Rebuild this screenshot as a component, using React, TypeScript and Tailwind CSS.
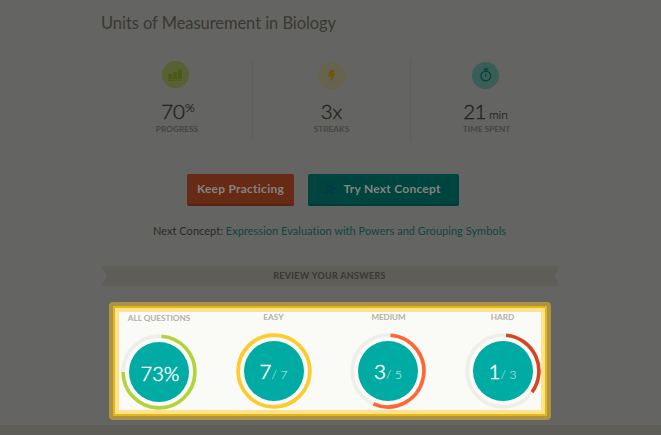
import React from 'react';

function BarsIcon() {
  return (
    <svg width="27" height="27" viewBox="0 0 27 27">
      <circle cx="13.5" cy="13.5" r="13.5" fill="#586034" />
      <g fill="#4a5b13">
        <rect x="6.5" y="13" width="3.6" height="5" rx="0.5" />
        <rect x="11.2" y="10.8" width="3.6" height="7.2" rx="0.5" />
        <rect x="16" y="8.3" width="3.8" height="9.7" rx="0.5" />
        <rect x="6.5" y="18.8" width="13.3" height="0.9" />
      </g>
    </svg>
  );
}

function BoltIcon() {
  return (
    <svg width="27" height="27" viewBox="0 0 27 27">
      <circle cx="13.5" cy="13.5" r="13.5" fill="#66634f" />
      <path d="M12 8h4.3l-1.5 3.8h2.6L12.2 20.5l1.2-5.8h-3.2z" fill="#6f5409" />
    </svg>
  );
}

function TimerIcon() {
  return (
    <svg width="27" height="27" viewBox="0 0 27 27">
      <circle cx="13.5" cy="13.5" r="13.5" fill="#3a5d57" />
      <circle cx="13.8" cy="14" r="4.9" fill="none" stroke="#02443f" strokeWidth="1.3" />
      <path d="M11.6 6.2h4.6v1.8h-1.4v1.4h-1.8V8h-1.4z" fill="#02443f" />
      <path d="M13.8 11.5v3.3" stroke="#02443f" strokeWidth="1" />
    </svg>
  );
}

function RunnerIcon() {
  return (
    <svg width="12" height="14" viewBox="0 0 12 14" fill="none" stroke="#003a4b" strokeWidth="1.6" strokeLinecap="round" strokeLinejoin="round">
      <circle cx="7.8" cy="1.9" r="1.3" fill="#003a4b" stroke="none" />
      <path d="M2 6.2l1.7-2.1 3.1.3-1.7 4 2.2 1.6-.9 3M6.8 4.6l1.3 2 2-.7M4.8 8.6L3.7 10.4 1 10.6" />
    </svg>
  );
}

interface RingProps {
  label: string;
  color: string;
  from: number;
  to: number;
  className: string;
  labelClass: string;
  children: React.ReactNode;
}

function Ring({ label, color, from, to, className, labelClass, children }: RingProps) {
  const r = 35.9;
  const point = (deg: number) => {
    const a = (deg * Math.PI) / 180;
    return `${38 + r * Math.sin(a)} ${38 - r * Math.cos(a)}`;
  };
  return (
    <div className={`flex w-[76px] flex-none flex-col items-center ${className}`}>
      <div className={`h-[10px] whitespace-nowrap font-bold leading-[10px] text-[#b5b0a7] ${labelClass}`}>{label}</div>
      <div className="mt-[11px] grid h-[76px] w-[76px] flex-none">
        <svg className="col-start-1 row-start-1" width="76" height="76" viewBox="0 0 76 76">
          <circle cx="38" cy="38" r={r} fill="none" stroke="#efeeea" strokeWidth="3.6" />
          {to - from >= 360 ? (
            <circle cx="38" cy="38" r={r} fill="none" stroke={color} strokeWidth="3.6" />
          ) : (
            <path
              d={`M${point(from)}A${r} ${r} 0 ${to - from > 180 ? 1 : 0} 1 ${point(to)}`}
              fill="none"
              stroke={color}
              strokeWidth="3.6"
            />
          )}
          <circle cx="38" cy="38" r="30" fill="#00aba4" />
        </svg>
        <div className="z-10 col-start-1 row-start-1 flex h-[76px] items-center justify-center whitespace-nowrap text-white">{children}</div>
      </div>
    </div>
  );
}

function Score({ got, total }: { got: string; total: string }) {
  return (
    <div className="flex items-baseline pt-[3px] leading-[24px]">
      <span className="text-[20.5px] font-light [-webkit-text-stroke:0.5px_white]">{got}</span>
      <span className="text-[12.5px] font-light text-[#d5f0ee]">/ {total}</span>
    </div>
  );
}

export default function App() {
  return (
    <div className="flex h-[435px] w-[661px] flex-col overflow-hidden bg-[#646462] font-['Lato',sans-serif]">
      <h1 className="ml-[101px] mt-[13px] h-[20px] flex-none whitespace-nowrap text-[16.5px] font-normal leading-[20px] tracking-[-0.06px] text-[#3a3833]">
        Units of Measurement in Biology
      </h1>

      <div className="ml-[98px] mt-[26px] flex h-[82px] flex-none">
        <div className="flex w-[155px] flex-col items-center border-r border-[#5e5e5b] pt-[2px]">
          <BarsIcon />
          <div className="mt-[12px] flex h-[22px] pl-[6px] leading-[22px] text-[#222221]">
            <span className="text-[20.5px] font-light [-webkit-text-stroke:0.35px]">70</span>
            <span className="-mt-[3px] text-[12.5px] font-light [-webkit-text-stroke:0.2px]">%</span>
          </div>
          <div className="mt-[2px] pl-[4px] text-[8.3px] font-bold leading-[10px] text-[#464541]">PROGRESS</div>
        </div>
        <div className="flex w-[158px] flex-col items-center border-r border-[#5e5e5b] pt-[3px]">
          <BoltIcon />
          <div className="mt-[11px] h-[22px] text-[20.5px] font-light leading-[22px] text-[#222221] [-webkit-text-stroke:0.35px]">3x</div>
          <div className="mt-[2px] text-[8.3px] font-bold leading-[10px] text-[#464541]">STREAKS</div>
        </div>
        <div className="flex w-[149px] flex-col items-center pt-[3px]">
          <TimerIcon />
          <div className="mt-[11px] flex h-[22px] items-baseline leading-[22px] text-[#222221]">
            <span className="text-[20.5px] font-light tracking-[-0.5px] [-webkit-text-stroke:0.35px]">21</span>
            <span className="ml-[3px] text-[12px] font-light [-webkit-text-stroke:0.2px]">min</span>
          </div>
          <div className="mt-[2px] whitespace-nowrap pl-[2px] text-[8.2px] font-bold leading-[10px] text-[#464541]">TIME SPENT</div>
        </div>
      </div>

      <div className="ml-[187px] mt-[33px] flex h-[32px] flex-none gap-[14px]">
        <button className="h-[32px] w-[107px] whitespace-nowrap rounded-[2px] border-b-2 border-[#562411] bg-[#672b15] text-[12px] font-bold leading-[30px] tracking-[0.25px] text-[#858380]">
          Keep Practicing
        </button>
        <button className="flex h-[32px] w-[151px] items-center whitespace-nowrap rounded-[2px] border-b-2 border-[#003a37] bg-[#004440] pl-[17px] text-[12px] font-bold tracking-[0.25px] text-[#858380]">
          <RunnerIcon />
          <span className="ml-[6.5px]">Try Next Concept</span>
        </button>
      </div>

      <p className="ml-[153px] mt-[18px] h-[14px] flex-none whitespace-nowrap text-[11px] leading-[14px] tracking-[0.03px] text-[#2a2a29]">
        Next Concept: <span className="text-[#11443f]">Expression Evaluation with Powers and Grouping Symbols</span>
      </p>

      <div className="ml-[101px] mt-[28px] flex h-[20px] w-[459px] flex-none items-center justify-center bg-[#5f5d58] [clip-path:polygon(0_0,100%_0,calc(100%-6px)_50%,100%_100%,0_100%,6px_50%)]">
        <span className="pr-[2px] text-[9px] font-bold tracking-[0.3px] text-[#3a3833]">REVIEW YOUR ANSWERS</span>
      </div>

      <div className="ml-[109px] mt-[16px] h-[118px] w-[442px] flex-none rounded-[4px] bg-[#ad9343] p-[4px]">
        <div className="h-[110px] w-[434px] bg-[#e6b615] p-[2px]">
          <div className="flex h-[106px] w-[430px] border-4 border-[#ffe38d] bg-[#fafaf6]">
            <Ring label="ALL QUESTIONS" color="#b4d33b" from={4} to={270} className="ml-[2px] mt-[1px]" labelClass="text-[8.2px]">
              <span className="pl-[2px] pt-[2px] text-[20px] font-light leading-[24px] [-webkit-text-stroke:0.4px_white]">73%</span>
            </Ring>
            <Ring label="EASY" color="#ffcb2b" from={0} to={360} className="ml-[38.5px]" labelClass="text-[8.3px]">
              <Score got="7" total="7" />
            </Ring>
            <Ring label="MEDIUM" color="#ff6633" from={4} to={204} className="ml-[38.5px]" labelClass="text-[8px] pl-[1px]">
              <Score got="3" total="5" />
            </Ring>
            <Ring label="HARD" color="#d64521" from={5} to={126} className="ml-[38.5px]" labelClass="text-[8.2px]">
              <Score got="1" total="3" />
            </Ring>
          </div>
        </div>
      </div>
      <div className="mt-[5px] h-[10px] flex-none bg-[#5f5d58]" />
    </div>
  );
}
